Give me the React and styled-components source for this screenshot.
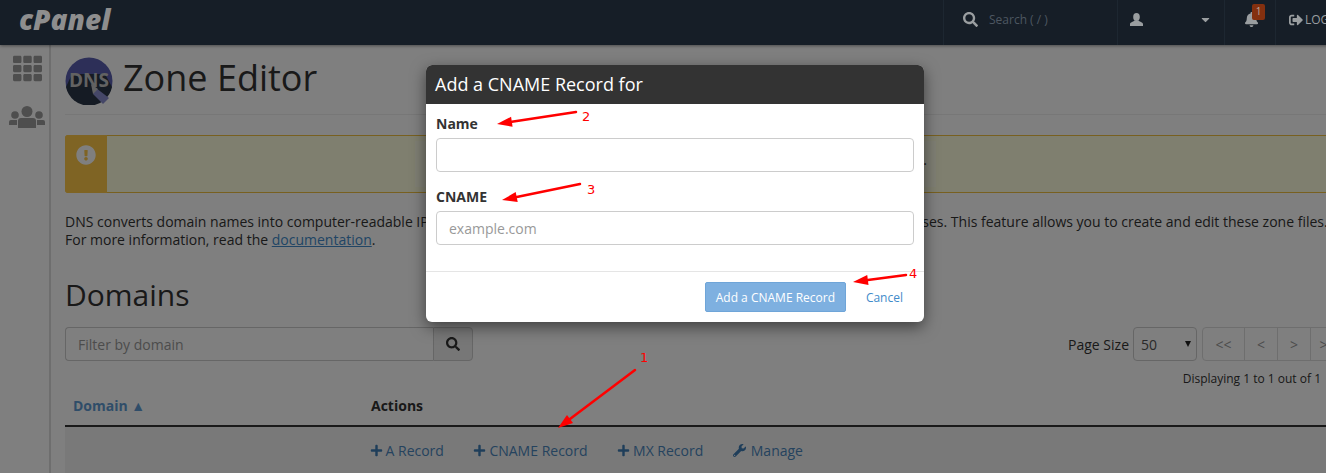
import React from 'react'
import styled, { createGlobalStyle } from 'styled-components'
import { FaSearch, FaBell, FaSignOutAlt, FaTh, FaExclamationCircle, FaPlus, FaWrench, FaCaretDown } from 'react-icons/fa'

const GlobalStyle = createGlobalStyle`
  html, body { margin: 0; padding: 0; background: #fff; }
  body { font-family: "Open Sans", "Liberation Sans", sans-serif; font-size: 14px; color: #333; }
  * { box-sizing: border-box; }
`

const arrows = [
  { id: 1, from: [635, 370], to: [558, 428], label: [640, 362] },
  { id: 2, from: [576, 112], to: [497, 124], label: [582, 121] },
  { id: 3, from: [580, 184], to: [502, 200], label: [587, 194] },
  { id: 4, from: [906, 275], to: [853, 282], label: [909, 278] },
]

const DnsIcon = () => (
  <svg width="48" height="48" viewBox="0 0 48 48">
    <circle cx="24" cy="24" r="23.5" fill="#5a5fb0" />
    <path d="M1 30 L7 17 L40 17 L47 30 A23.5 23.5 0 0 1 1 30 Z" fill="#2b3648" />
    <text x="24" y="30" textAnchor="middle" fontFamily="'Open Sans', sans-serif" fontWeight="700" fontSize="19" fill="#c4c4c4">DNS</text>
    <path d="M31 31 L44 41 L38 47 L28 37 Z" fill="#8a8fd0" />
    <path d="M26 27 L33 32 L28 37 Z" fill="#c4c4c4" />
  </svg>
)

const UserIcon = () => (
  <svg width="13" height="13" viewBox="0 0 13 13" fill="currentColor">
    <ellipse cx="6.5" cy="4" rx="3.3" ry="4" />
    <path d="M0 13 V11 C0 9.2 3 8.8 4.5 7.4 L8.5 7.4 C10 8.8 13 9.2 13 11 V13 Z" />
  </svg>
)

const GroupIcon = () => (
  <svg width="36" height="22" viewBox="0 0 36 22" fill="currentColor">
    <circle cx="18" cy="5.5" r="5.5" />
    <path d="M9 15 Q9 12 12 12 H24 Q27 12 27 15 V22 H9 Z" />
    <circle cx="6" cy="9" r="3.8" />
    <path d="M0 16 Q0 14 2 14 H8 V19 H0 Z" />
    <circle cx="30" cy="9" r="3.8" />
    <path d="M28 14 H34 Q36 14 36 16 V19 H28 Z" />
  </svg>
)

const Arrow = ({ from, to }) => {
  const dx = to[0] - from[0]
  const dy = to[1] - from[1]
  const len = Math.hypot(dx, dy)
  const ux = dx / len
  const uy = dy / len
  const bx = to[0] - ux * 15
  const by = to[1] - uy * 15
  const head = `${to[0]},${to[1]} ${bx - uy * 5},${by + ux * 5} ${bx + uy * 5},${by - ux * 5}`
  return (
    <g>
      <line x1={from[0]} y1={from[1]} x2={bx} y2={by} stroke="#f00" strokeWidth="2.5" strokeLinecap="round" />
      <polygon points={head} fill="#f00" />
    </g>
  )
}

export default function App() {
  return (
    <Page>
      <GlobalStyle />
      <Topbar>
        <Logo>cPanel</Logo>
        <TopTools>
          <SearchCell>
            <FaSearch />
            <span>Search ( / )</span>
          </SearchCell>
          <UserCell>
            <UserIcon />
            <FaCaretDown />
          </UserCell>
          <BellCell>
            <FaBell />
            <Badge>1</Badge>
          </BellCell>
          <LogoutCell>
            <FaSignOutAlt />
            <span>LOGOUT</span>
          </LogoutCell>
        </TopTools>
      </Topbar>
      <Shell>
        <Sidebar>
          <FaTh size={29} />
          <GroupIcon />
        </Sidebar>
        <Main>
          <PageHeader>
            <DnsIcon />
            <PageTitle>Zone Editor</PageTitle>
          </PageHeader>
          <Alert>
            <AlertSide><FaExclamationCircle /></AlertSide>
            <AlertBody>
              <AlertPatch>.</AlertPatch>
            </AlertBody>
          </Alert>
          <Description>
            DNS converts domain names into computer-readable IP addresses. Zone files point domain names to their corresponding IP addresses. This feature allows you to create and edit these zone files.
            <br />
            For more information, read the <DocLink>documentation</DocLink>.
          </Description>
          <SectionTitle>Domains</SectionTitle>
          <Toolbar>
            <FilterGroup>
              <FilterInput placeholder="Filter by domain" />
              <FilterButton><FaSearch /></FilterButton>
            </FilterGroup>
            <Paging>
              <span>Page Size</span>
              <SizeSelect>
                <span>50</span>
                <SelectCaret />
              </SizeSelect>
              <Pager>
                <PagerButton $w={42}>&lt;&lt;</PagerButton>
                <PagerButton $w={33}>&lt;</PagerButton>
                <PagerButton $w={33}>&gt;</PagerButton>
                <PagerButton $w={33}>&gt;&gt;</PagerButton>
              </Pager>
            </Paging>
          </Toolbar>
          <Displaying>Displaying 1 to 1 out of 1</Displaying>
          <TableHead>
            <DomainHead>Domain ▲</DomainHead>
            <ActionsHead>Actions</ActionsHead>
          </TableHead>
          <TableRow>
            <ActionLink><FaPlus />A Record</ActionLink>
            <ActionLink><FaPlus />CNAME Record</ActionLink>
            <ActionLink><FaPlus />MX Record</ActionLink>
            <ActionLink $gap={5}><FaWrench />Manage</ActionLink>
          </TableRow>
        </Main>
      </Shell>
      <Backdrop />
      <Modal>
        <ModalTitle>Add a CNAME Record for</ModalTitle>
        <ModalBody>
          <Field>
            <FieldLabel>Name</FieldLabel>
            <FieldInput />
          </Field>
          <Field>
            <FieldLabel>CNAME</FieldLabel>
            <FieldInput placeholder="example.com" />
          </Field>
        </ModalBody>
        <ModalFooter>
          <AddButton>Add a CNAME Record</AddButton>
          <CancelLink>Cancel</CancelLink>
        </ModalFooter>
      </Modal>
      <Annotations viewBox="0 0 1326 473">
        {arrows.map(a => (
          <g key={a.id}>
            <Arrow from={a.from} to={a.to} />
            <text x={a.label[0]} y={a.label[1]} fill="#f00" fontSize="13" fontFamily="'DejaVu Sans', sans-serif">{a.id}</text>
          </g>
        ))}
      </Annotations>
    </Page>
  )
}

const Page = styled.div`
  position: relative;
  width: 1326px;
  height: 473px;
  overflow: hidden;
`
const Topbar = styled.header`
  position: relative;
  z-index: 2;
  display: flex;
  justify-content: space-between;
  width: 1357px;
  height: 45px;
  background: #161e27;
  box-shadow: 0 1px 3px rgba(0, 0, 0, .4);
`
const Logo = styled.div`
  padding-left: 19px;
  font-size: 28px;
  font-weight: 800;
  font-style: italic;
  line-height: 39px;
  color: #8e8e8e;
`
const TopTools = styled.div`
  display: flex;
  height: 45px;
`
const TopCell = styled.div`
  position: relative;
  display: flex;
  align-items: center;
  padding-bottom: 6px;
  border-left: 1px solid #1d2731;
  color: #9a9ea0;
`
const SearchCell = styled(TopCell)`
  width: 174px;
  padding-left: 19px;
  gap: 11px;
  font-size: 12px;
  svg { font-size: 15px; }
  span { color: #4d5761; }
`
const UserCell = styled(TopCell)`
  width: 107px;
  padding-left: 12px;
  padding-right: 12px;
  justify-content: space-between;
  svg { font-size: 13px; }
`
const BellCell = styled(TopCell)`
  width: 51px;
  padding-left: 19px;
  svg { font-size: 15px; }
`
const Badge = styled.span`
  position: absolute;
  top: 4px;
  left: 27px;
  width: 13px;
  height: 16px;
  border-radius: 2px;
  background: #84300f;
  color: #b9a79f;
  font-size: 10px;
  line-height: 15px;
  text-align: center;
`
const LogoutCell = styled(TopCell)`
  width: 82px;
  padding-left: 13px;
  gap: 2px;
  font-size: 12px;
  white-space: nowrap;
  svg { font-size: 14px; }
`
const Shell = styled.div`
  display: flex;
  width: 1360px;
`
const Sidebar = styled.nav`
  display: flex;
  flex-direction: column;
  align-items: center;
  gap: 23px;
  flex: 0 0 51px;
  height: 428px;
  padding-top: 9px;
  padding-left: 5px;
  border-right: 2px solid #dcdcdc;
  color: #9c9c9c;
`
const Main = styled.main`
  flex: 1;
  padding: 12px 15px 0 14px;
`
const PageHeader = styled.div`
  display: flex;
  align-items: center;
  gap: 10px;
  height: 58px;
  padding-bottom: 9px;
  border-bottom: 1px solid #eee;
`
const PageTitle = styled.h1`
  margin: 0 0 6px;
  font-size: 36px;
  font-weight: 400;
  line-height: 44px;
  color: #333;
`
const Alert = styled.div`
  display: flex;
  height: 58px;
  margin-top: 20px;
  border: 1px solid #f0c040;
  border-radius: 3px;
  background: #fffede;
`
const AlertSide = styled.div`
  flex: 0 0 42px;
  display: flex;
  justify-content: center;
  padding-top: 10px;
  margin: -1px 0 -1px -1px;
  border-radius: 3px 0 0 3px;
  background: #fec848;
  color: #fff;
  font-size: 20px;
`
const AlertBody = styled.div`
  display: flex;
  align-items: center;
  padding-left: 308px;
`
const AlertPatch = styled.div`
  display: flex;
  justify-content: flex-end;
  align-items: center;
  width: 521px;
  height: 46px;
  padding: 0 9px 10px 0;
  background: #fffee8;
`
const Description = styled.p`
  margin: 20px 0 0;
  font-size: 14px;
  line-height: 18px;
  white-space: nowrap;
`
const DocLink = styled.a`
  color: #428bca;
  text-decoration: underline;
`
const SectionTitle = styled.h2`
  margin: 26px 0 0;
  font-size: 30px;
  font-weight: 400;
  line-height: 40px;
`
const Toolbar = styled.div`
  display: flex;
  justify-content: space-between;
  margin-top: 12px;
`
const FilterGroup = styled.div`
  display: flex;
  width: 408px;
  height: 34px;
`
const FilterInput = styled.input`
  flex: 1;
  min-width: 0;
  padding: 0 12px;
  border: 1px solid #ccc;
  border-right: 0;
  border-radius: 4px 0 0 4px;
  font: 14px "Open Sans", sans-serif;
  color: #555;
  &::placeholder { color: #999; }
`
const FilterButton = styled.div`
  display: flex;
  align-items: center;
  justify-content: center;
  width: 40px;
  border: 1px solid #ccc;
  border-radius: 0 4px 4px 0;
  background: #eee;
  color: #333;
`
const Paging = styled.div`
  display: flex;
  align-items: center;
`
const SizeSelect = styled.div`
  position: relative;
  display: flex;
  align-items: center;
  width: 64px;
  height: 34px;
  margin-left: 4px;
  padding-left: 7px;
  border: 1px solid #ccc;
  border-radius: 4px;
  color: #555;
`
const SelectCaret = styled.i`
  position: absolute;
  right: 5px;
  top: 13px;
  border-left: 3px solid transparent;
  border-right: 3px solid transparent;
  border-top: 6px solid #222;
`
const Pager = styled.div`
  display: flex;
  height: 34px;
  margin-left: 5px;
  border: 1px solid #ddd;
  border-radius: 4px;
`
const PagerButton = styled.div`
  display: flex;
  align-items: center;
  justify-content: center;
  width: ${p => p.$w}px;
  color: #999;
  border-right: 1px solid #ddd;
  &:last-child { border-right: 0; }
`
const Displaying = styled.div`
  margin-top: 9px;
  padding-right: 24px;
  text-align: right;
  font-size: 12px;
  line-height: 18px;
`
const TableHead = styled.div`
  display: flex;
  align-items: center;
  height: 39px;
  padding: 0 8px 2px;
  border-bottom: 2px solid #333;
  font-weight: 700;
`
const DomainHead = styled.div`
  width: 298px;
  color: #5f9bd2;
`
const ActionsHead = styled.div`
  color: #333;
`
const TableRow = styled.div`
  display: flex;
  align-items: center;
  gap: 29.5px;
  height: 46px;
  padding-left: 304.5px;
  background: #f3f3f3;
`
const ActionLink = styled.a`
  display: flex;
  align-items: center;
  gap: ${p => p.$gap || 3}px;
  color: #4a86bd;
  svg { font-size: 13px; color: #3f7db5; }
`
const Backdrop = styled.div`
  position: absolute;
  inset: 0;
  z-index: 1;
  background: rgba(0, 0, 0, .5);
`
const Modal = styled.div`
  position: absolute;
  z-index: 3;
  top: 65px;
  left: 426px;
  width: 498px;
  height: 257px;
  overflow: hidden;
  border-radius: 6px;
  background: #fff;
  box-shadow: 0 5px 15px rgba(0, 0, 0, .5);
`
const ModalTitle = styled.div`
  height: 39px;
  padding-left: 9px;
  background: #333;
  color: #fff;
  font-size: 18px;
  line-height: 39px;
`
const ModalBody = styled.div`
  display: flex;
  flex-direction: column;
  gap: 15px;
  height: 168px;
  padding: 10px 10px 0;
  border-bottom: 1px solid #e5e5e5;
`
const Field = styled.div`
  display: flex;
  flex-direction: column;
  gap: 4px;
`
const FieldLabel = styled.label`
  font-weight: 700;
  font-size: 14px;
  line-height: 20px;
  color: #333;
`
const FieldInput = styled.input`
  height: 34px;
  padding: 0 12px;
  border: 1px solid #ccc;
  border-radius: 4px;
  font: 14px "Open Sans", sans-serif;
  &::placeholder { color: #999; }
`
const ModalFooter = styled.div`
  display: flex;
  justify-content: flex-end;
  align-items: center;
  gap: 20px;
  height: 50px;
  padding: 0 21px 0 0;
`
const AddButton = styled.div`
  display: flex;
  align-items: center;
  justify-content: center;
  width: 141px;
  height: 30px;
  border: 1px solid #6fa5d8;
  border-radius: 2px;
  background: #7eb0e0;
  color: #fff;
  font-size: 12px;
  font-weight: 400;
`
const CancelLink = styled.a`
  color: #428bca;
  font-size: 12px;
`
const Annotations = styled.svg`
  position: absolute;
  z-index: 4;
  inset: 0;
  width: 1326px;
  height: 473px;
  pointer-events: none;
`
